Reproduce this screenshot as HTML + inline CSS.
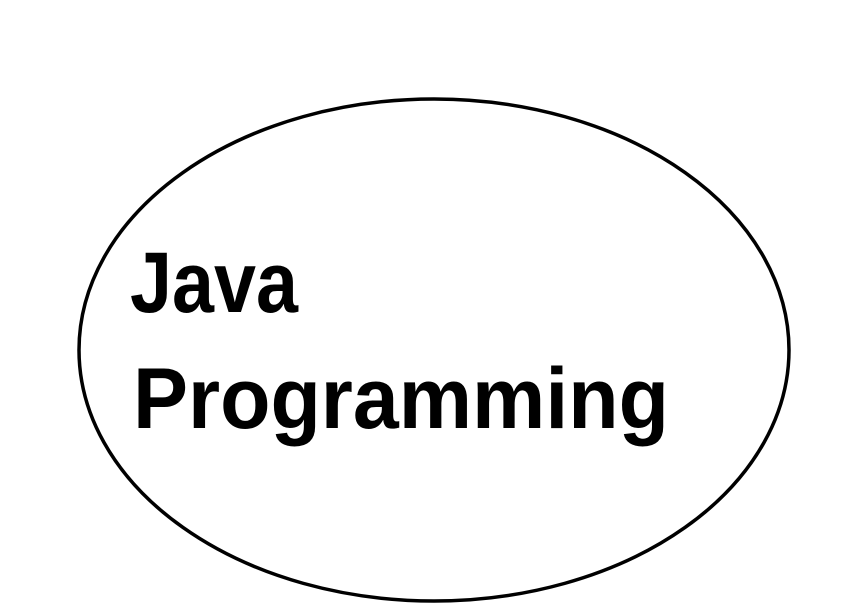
<!DOCTYPE html>
<html><head><meta charset="utf-8"><style>
html,body{margin:0;padding:0;background:#fff;width:854px;height:604px;overflow:hidden}
</style></head><body>
<svg width="854" height="604" xmlns="http://www.w3.org/2000/svg">
<ellipse cx="434" cy="350" rx="355" ry="251" fill="none" stroke="#000" stroke-width="3.5"/>
<text x="130" y="312" font-family="Liberation Sans, sans-serif" font-weight="bold" font-size="86" textLength="168" lengthAdjust="spacingAndGlyphs">Java</text>
<text x="133" y="428" font-family="Liberation Sans, sans-serif" font-weight="bold" font-size="86" textLength="536" lengthAdjust="spacingAndGlyphs">Programming</text>
</svg>
</body></html>
